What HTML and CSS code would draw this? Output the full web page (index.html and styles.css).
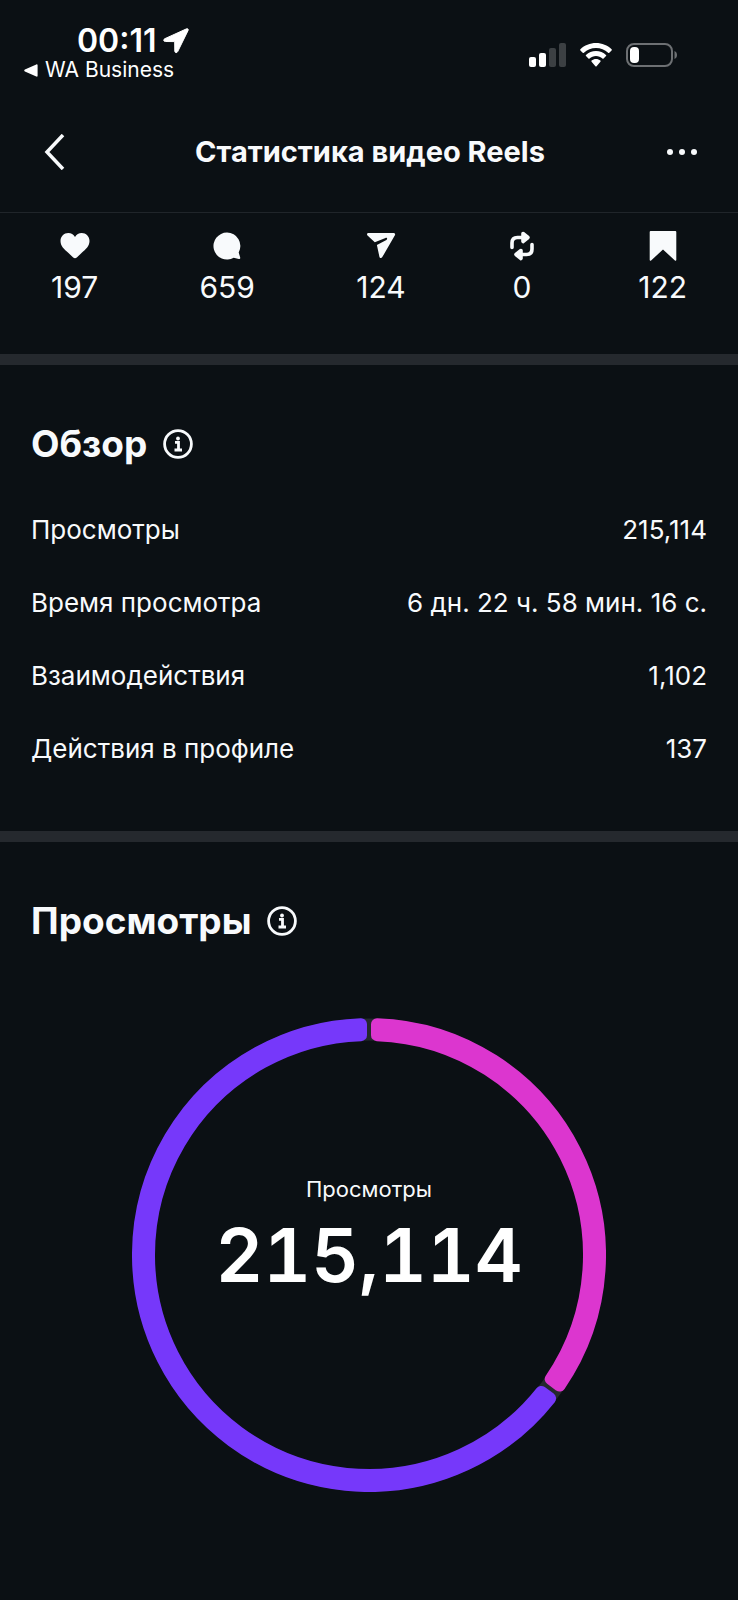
FILE: index.html
```
<!DOCTYPE html>
<html lang="ru">
<head>
    <meta charset="UTF-8">
    <meta name="viewport" content="width=device-width, initial-scale=1.0">
    <title>Статистика видео Reels</title>
    <link rel="stylesheet" href="styles.css">
</head>
<body>

<!-- Status bar -->
<div class="status-bar">
    <div class="status-left">
        <div class="clock">
            <span>00:11</span>
            <svg width="26" height="26" viewBox="0 0 26 26" fill="currentColor"><path d="M23.6.8 1.8 10.7c-1.7.8-1.2 2.8.6 2.8l9.3.1.1 9.4c0 1.900 2.100 2.300 2.900.6L25.100 2.400c.5-1.200-.4-2.100-1.500-1.600Z" stroke="currentColor"/></svg>
        </div>
        <a class="back-app" href="#">
            <svg width="14" height="13" viewBox="0 0 14 13" fill="currentColor"><path d="M12.300.4.9 5.600c-.9.400-.9 1.400 0 1.800l11.400 5.200c.800.300 1.300 0 1.300-.8V1.200c0-.8-.5-1.100-1.300-.8Z"/></svg>
            WA Business
        </a>
    </div>
    <div class="status-right">
        <svg width="37" height="24" viewBox="0 0 37 24" fill="currentColor">
            <rect x="0" y="14" width="7" height="10" rx="2"/>
            <rect x="10" y="10" width="7" height="14" rx="2"/>
            <rect class="dim" x="20" y="5" width="7" height="19" rx="2"/>
            <rect class="dim" x="30" y="0" width="7" height="24" rx="2"/>
        </svg>
        <svg width="32" height="24" viewBox="0 0 32 24" fill="currentColor">
            <path d="M16 0C10 0 4.500 2.300.4 6.200c-.4.400-.4.800 0 1.200l2.300 2.300c.4.400.8.400 1.200 0C7.100 6.700 11.400 5 16 5s8.900 1.700 12.100 4.700c.4.400.8.400 1.200 0l2.300-2.300c.4-.4.400-.8 0-1.200C27.500 2.300 22 0 16 0Z"/>
            <path d="M16 8c-3.900 0-7.400 1.500-10 3.900-.4.400-.4.800 0 1.200l2.400 2.400c.4.400.8.400 1.200 0 1.700-1.500 3.900-2.500 6.400-2.500s4.700 1 6.400 2.500c.4.400.8.400 1.200 0l2.400-2.400c.4-.4.400-.8 0-1.200C23.400 9.500 19.900 8 16 8Z"/>
            <path d="M16 16c-1.700 0-3.200.6-4.400 1.600-.4.400-.4.800 0 1.200l3.800 4.500c.4.400.8.400 1.200 0l3.800-4.500c.4-.4.400-.8 0-1.200C19.200 16.600 17.700 16 16 16Z"/>
        </svg>
        <svg width="52" height="24" viewBox="0 0 52 24">
            <rect class="battery-frame" x="1" y="1" width="45" height="22" rx="7"/>
            <path class="battery-tip" d="M48.500 8c1.700.7 2.500 2.200 2.500 4s-.8 3.300-2.500 4Z"/>
            <rect x="4" y="4" width="9" height="16" rx="4" fill="currentColor"/>
        </svg>
    </div>
</div>

<!-- Header -->
<header class="header">
    <button class="icon-btn" aria-label="Назад">
        <svg width="22" height="36" viewBox="0 0 22 36" fill="none" stroke="currentColor" stroke-width="3.500"><path d="M20 1 4 18l16 17"/></svg>
    </button>
    <h1>Статистика видео Reels</h1>
    <button class="icon-btn icon-btn-right" aria-label="Ещё">
        <svg width="30" height="6" viewBox="0 0 30 6" fill="currentColor"><circle cx="3" cy="3" r="3"/><circle cx="15" cy="3" r="3"/><circle cx="27" cy="3" r="3"/></svg>
    </button>
</header>

<main>
    <section class="reactions">
        <div class="reaction">
            <svg viewBox="0 0 30 32" fill="currentColor"><path d="M8.300 3C4 3 .5 6.500.5 11c0 5 3.500 8 8 12l4.700 4.600c1 1 2.600 1 3.600 0L21.500 23c4.500-4 8-7 8-12 0-4.500-3.500-8-7.800-8-2.900 0-5.200 1.500-6.700 3.900C13.500 4.500 11.200 3 8.300 3Z"/></svg>
            <span>197</span>
        </div>
        <div class="reaction">
            <svg viewBox="0 0 30 32" fill="currentColor"><path d="M15 2.500a13.500 13.500 0 1 0 6.700 25.200l5.100 1.300c.9.200 1.600-.5 1.400-1.400L26.700 22.500A13.500 13.500 0 0 0 15 2.500Z"/></svg>
            <span>659</span>
        </div>
        <div class="reaction">
            <svg viewBox="0 0 30 32" fill="currentColor"><path d="M27.500 3H2.500C1 3 .5 4.500 1.500 5.500l7.300 6.800 10.700-4.400c1.500-.6 2.400 1.200.9 2L10.900 15l2.500 11.700c.3 1.500 2.100 1.700 2.900.4L28.900 5.300C29.500 4.200 28.900 3 27.500 3Z"/></svg>
            <span>124</span>
        </div>
        <div class="reaction">
            <svg viewBox="0 0 30 32" fill="none" stroke="currentColor" stroke-width="3.600" stroke-linecap="round" stroke-linejoin="round">
                <path d="M5 17.500V13c0-3.500 2-5.500 5.500-5.500H19"/>
                <path d="M25 14.500V19c0 3.500-2 5.500-5.500 5.500H11"/>
                <path d="m16 3.500 5 4-5 4Z" fill="currentColor"/>
                <path d="m14 20.500-5 4 5 4Z" fill="currentColor"/>
            </svg>
            <span>0</span>
        </div>
        <div class="reaction">
            <svg viewBox="0 0 30 32" fill="currentColor"><path d="M2.600 1h24.800c.5 0 .9.400.9.900v28c0 .8-.8 1.100-1.400.6L15 19.500 3.100 30.500c-.6.500-1.400.2-1.400-.6v-28c0-.5.400-.9.900-.9Z"/></svg>
            <span>122</span>
        </div>
    </section>

    <section class="block">
        <div class="block-title">
            <h2>Обзор</h2>
            <button class="info-btn" aria-label="Информация">
                <svg viewBox="0 0 30 30" fill="none" stroke="currentColor" stroke-width="2.800">
                    <circle cx="15" cy="15" r="13.400"/>
                    <path d="M12 13.300h3.500V21M11.500 21h7.500"/>
                    <circle cx="15" cy="9.500" r="1.900" fill="currentColor" stroke="none"/>
                </svg>
            </button>
        </div>
        <dl class="metrics">
            <div class="metric"><dt>Просмотры</dt><dd>215,114</dd></div>
            <div class="metric"><dt>Время просмотра</dt><dd>6 дн. 22 ч. 58 мин. 16 с.</dd></div>
            <div class="metric"><dt>Взаимодействия</dt><dd>1,102</dd></div>
            <div class="metric"><dt>Действия в профиле</dt><dd>137</dd></div>
        </dl>
    </section>

    <section class="block">
        <div class="block-title">
            <h2>Просмотры</h2>
            <button class="info-btn" aria-label="Информация">
                <svg viewBox="0 0 30 30" fill="none" stroke="currentColor" stroke-width="2.800">
                    <circle cx="15" cy="15" r="13.400"/>
                    <path d="M12 13.300h3.500V21M11.500 21h7.500"/>
                    <circle cx="15" cy="9.500" r="1.900" fill="currentColor" stroke="none"/>
                </svg>
            </button>
        </div>
        <div class="chart">
            <svg viewBox="-237 -237 474 474">
                <circle class="track" r="225.500"/>
                <path class="part part-pink" d="M8-230.860A231 231 0 0 1 190.570 130.550L181.710 124.020A220 220 0 0 0 8-219.850Z"/>
                <path class="part part-purple" d="M181.070 143.430A231 231 0 1 1-8-230.860V-219.850A220 220 0 1 0 172.210 136.900Z"/>
            </svg>
            <div class="chart-label">
                <span class="chart-caption">Просмотры</span>
                <span class="chart-total">215,114</span>
            </div>
        </div>
    </section>
</main>

</body>
</html>
```
FILE: styles.css
```
* {
    margin: 0;
    padding: 0;
    box-sizing: border-box;
}

body {
    font-family: Inter, sans-serif;
    background-color: #0b1014;
    color: #f8fafc;
}

button {
    background: none;
    border: none;
    color: inherit;
    cursor: pointer;
}

svg {
    display: block;
}

/* Status bar */
.status-bar {
    display: flex;
    justify-content: space-between;
    align-items: flex-start;
    padding: 24px 60px 0 24px;
    height: 92px;
    color: #fff;
}

.clock {
    display: flex;
    align-items: center;
    gap: 7px;
    padding-left: 53px;
    font-size: 32px;
    font-weight: 600;
    line-height: 34px;
}

.back-app {
    display: flex;
    align-items: center;
    gap: 7px;
    color: inherit;
    font-size: 21px;
    line-height: 24px;
    text-decoration: none;
}

.status-right {
    display: flex;
    align-items: center;
    gap: 14px;
    padding-top: 19px;
}

.dim {
    fill: #3c4043;
}

.battery-frame {
    fill: none;
    stroke: #6d7073;
    stroke-width: 2;
}

.battery-tip {
    fill: #6d7073;
}

/* Header */
.header {
    display: flex;
    justify-content: space-between;
    align-items: center;
    height: 121px;
    padding: 0 41px 0 43px;
    border-bottom: 1px solid #20252a;
}

.header h1 {
    font-size: 29px;
    font-weight: 700;
    line-height: 36px;
}

.icon-btn {
    display: flex;
    align-items: center;
    width: 44px;
    height: 44px;
}

.icon-btn-right {
    justify-content: flex-end;
}

/* Reactions */
.reactions {
    display: flex;
    justify-content: space-between;
    height: 141px;
    padding: 17px 51px 0;
}

.reaction {
    display: flex;
    flex-direction: column;
    align-items: center;
    gap: 7px;
    font-size: 30px;
    line-height: 36px;
}

.reaction svg {
    width: 30px;
    height: 32px;
}

/* Blocks */
.block {
    border-top: 11px solid #25292e;
    padding: 56px 31px 46px;
}

.block-title {
    display: flex;
    align-items: center;
    gap: 16px;
}

.block-title h2 {
    font-size: 37px;
    font-weight: 700;
    line-height: 46px;
}

.info-btn svg {
    width: 30px;
    height: 30px;
}

.metrics {
    margin-top: 26px;
}

.metric {
    display: flex;
    justify-content: space-between;
    font-size: 26px;
    line-height: 33px;
    padding: 20px 0;
}

/* Chart */
.chart {
    position: relative;
    max-width: 474px;
    margin: 74px auto 0;
}

.track {
    fill: none;
    stroke: #25292e;
    stroke-width: 22;
}

.part {
    stroke-width: 12;
    stroke-linejoin: round;
}

.part-pink {
    fill: #dc36cf;
    stroke: #dc36cf;
}

.part-purple {
    fill: #7638fa;
    stroke: #7638fa;
}

.chart-label {
    position: absolute;
    inset: 0;
    display: flex;
    flex-direction: column;
    justify-content: center;
    align-items: center;
    gap: 2px;
    padding-bottom: 30px;
}

.chart-caption {
    font-size: 22px;
    line-height: 28px;
}

.chart-total {
    font-size: 74px;
    font-weight: 600;
    font-variant-numeric: tabular-nums;
    line-height: 100px;
    color: #fff;
}
```
